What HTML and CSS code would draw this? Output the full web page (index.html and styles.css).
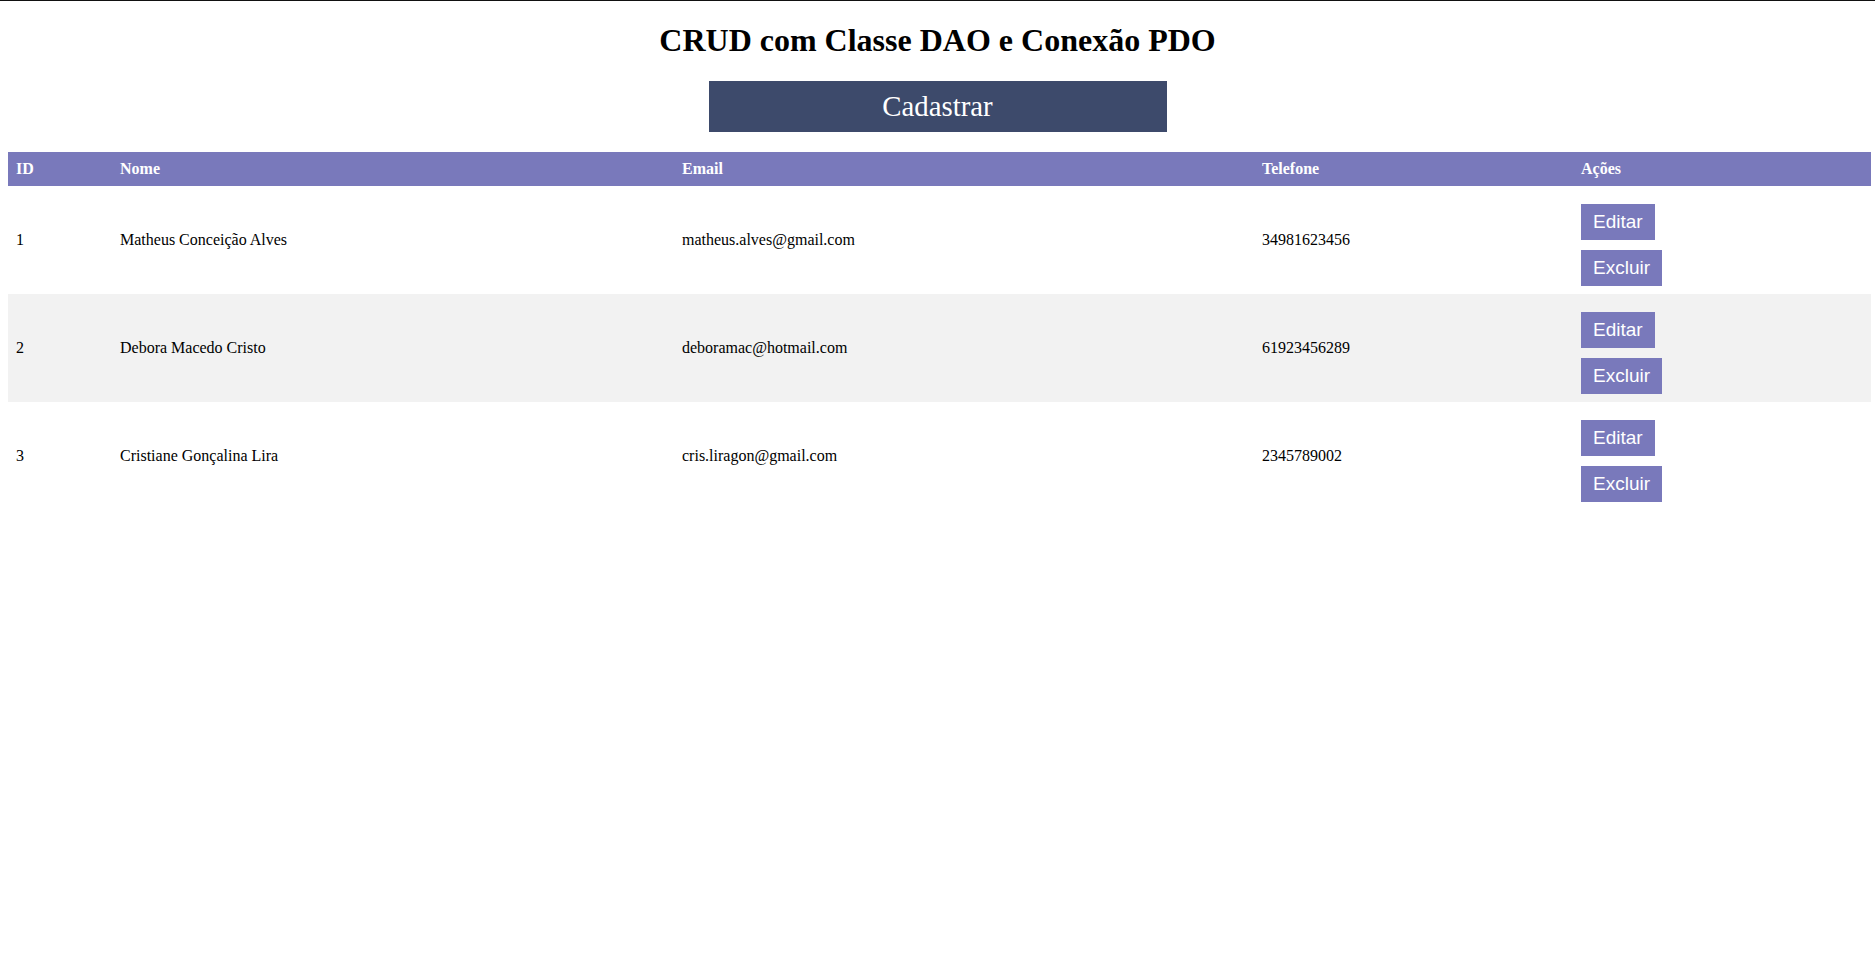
FILE: index.html
```html
<!DOCTYPE html>
<html lang="pt-BR">
<head>
<meta charset="utf-8">
<title>CRUD com Classe DAO e Conexão PDO</title>
<link rel="stylesheet" href="styles.css">
</head>
<body>
<h1 class="title">CRUD com Classe DAO e Conexão PDO</h1>
<a class="btn-cadastrar" href="#">Cadastrar</a>
<table class="tabela">
  <colgroup>
    <col class="c-id">
    <col class="c-nome">
    <col class="c-email">
    <col class="c-tel">
    <col class="c-acoes">
  </colgroup>
  <thead>
    <tr>
      <th>ID</th>
      <th>Nome</th>
      <th>Email</th>
      <th>Telefone</th>
      <th>Ações</th>
    </tr>
  </thead>
  <tbody>
    <tr>
      <td>1</td>
      <td>Matheus Conceição Alves</td>
      <td>matheus.alves@gmail.com</td>
      <td>34981623456</td>
      <td><div class="acoes"><a class="btn" href="#">Editar</a><a class="btn" href="#">Excluir</a></div></td>
    </tr>
    <tr>
      <td>2</td>
      <td>Debora Macedo Cristo</td>
      <td>deboramac@hotmail.com</td>
      <td>61923456289</td>
      <td><div class="acoes"><a class="btn" href="#">Editar</a><a class="btn" href="#">Excluir</a></div></td>
    </tr>
    <tr>
      <td>3</td>
      <td>Cristiane Gonçalina Lira</td>
      <td>cris.liragon@gmail.com</td>
      <td>2345789002</td>
      <td><div class="acoes"><a class="btn" href="#">Editar</a><a class="btn" href="#">Excluir</a></div></td>
    </tr>
  </tbody>
</table>
</body>
</html>
```
FILE: styles.css
```css
html {
  border-top: 1px solid #111111;
  background: #ffffff;
}

body {
  margin: 0 4px 8px 8px;
  font-family: "Liberation Serif", "Times New Roman", serif;
  font-size: 16px;
  color: #000000;
}

.title {
  font-size: 32px;
  font-weight: bold;
  text-align: center;
  margin: 21px 0 22px;
  line-height: 37px;
  padding-right: 4px;
}

.btn-cadastrar {
  display: block;
  width: 458px;
  margin: 0 0 0 calc(50% - 231px);
  box-sizing: border-box;
  background: #3d4a6b;
  color: #ffffff;
  text-align: center;
  text-decoration: none;
  font-size: 28.8px;
  line-height: 33px;
  padding: 9px 0;
}

.tabela {
  width: 100%;
  margin-top: 20px;
  border-collapse: collapse;
  table-layout: fixed;
}

.c-id { width: 104px; }
.c-nome { width: 562px; }
.c-email { width: 580px; }
.c-tel { width: 319px; }
.c-acoes { width: auto; }

.tabela th {
  background: #7979bb;
  color: #ffffff;
  font-weight: bold;
  text-align: left;
  padding: 8px;
  line-height: 18px;
}

.tabela td {
  padding: 8px;
  text-align: left;
  vertical-align: middle;
  line-height: 18px;
}

.tabela tbody tr:nth-child(even) {
  background: #f2f2f2;
}

.acoes {
  display: flex;
  flex-direction: column;
  align-items: flex-start;
}

.btn {
  display: block;
  margin-top: 10px;
  background: #7979bb;
  color: #ffffff;
  text-decoration: none;
  font-family: "Liberation Sans", Arial, sans-serif;
  font-size: 19px;
  line-height: 22px;
  padding: 7px 12px;
}
```
